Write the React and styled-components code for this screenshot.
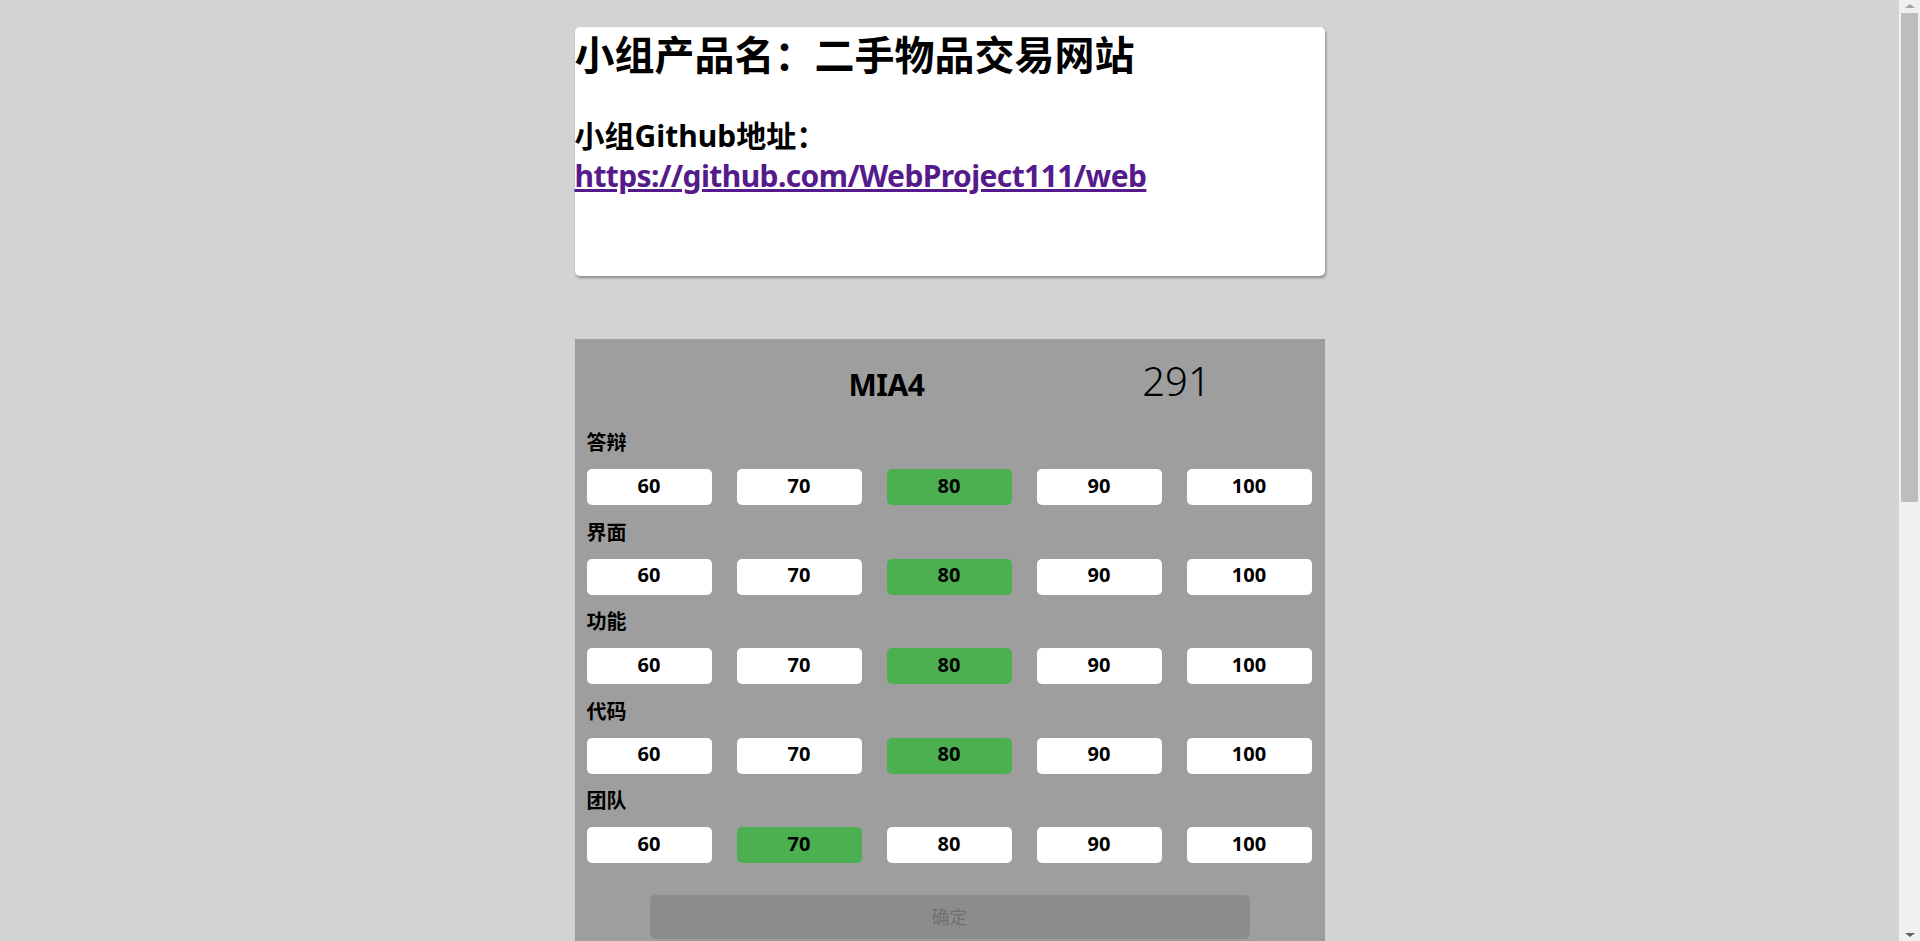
import React, { useState } from "react";
import styled, { createGlobalStyle } from "styled-components";

const GlobalStyle = createGlobalStyle`
  html, body {
    margin: 0;
    padding: 0;
  }
  body {
    background: #d3d3d3;
    font-family: "Noto Sans", "Noto Sans CJK SC", sans-serif;
    font-size: 20px;
    color: #000;
  }
  * {
    box-sizing: border-box;
  }
`;

const Page = styled.div`
  display: flex;
  flex-direction: column;
  align-items: center;
  padding: 27px 21px 120px 0;
`;

/* window scrollbar, drawn over the right edge */
const ScrollTrack = styled.div`
  position: fixed;
  top: 0;
  right: 0;
  width: 21px;
  height: 100vh;
  background: #f0f0f0;
  display: flex;
  flex-direction: column;
  align-items: center;
`;

const Arrow = styled.div`
  width: 0;
  height: 0;
  margin: 4px 0;
  border-left: 5px solid transparent;
  border-right: 5px solid transparent;
  ${(p) =>
    p.$down
      ? "border-top: 4px solid #606060; margin-top: auto;"
      : "border-bottom: 4px solid #a3a3a3;"}
`;

const Thumb = styled.div`
  width: 17px;
  height: 489px;
  margin-top: 1px;
  background: #bdbdbd;
`;

const InfoCard = styled.section`
  width: 750px;
  height: 249px;
  background: #fff;
  border-radius: 5px;
  box-shadow: 1px 2px 3px rgba(0, 0, 0, 0.35);
`;

const Title = styled.h1`
  margin: 0;
  font-size: 40px;
  line-height: 56px;
  font-weight: 700;
`;

const Subtitle = styled.h2`
  margin: 33px 0 0;
  font-size: 30px;
  line-height: 40px;
  font-weight: 700;
`;

const RepoLink = styled.a`
  display: inline-block;
  color: #551a8b;
  text-decoration: underline;
  letter-spacing: -0.6px;
`;

const ScorePanel = styled.section`
  width: 750px;
  margin-top: 63px;
  padding: 15px 12px 40px;
  background: #9e9e9e;
`;

const Header = styled.div`
  display: grid;
  grid-template-columns: 150px 150px;
  column-gap: 136px;
  align-items: baseline;
  padding-left: 225px;
  height: 54px;
  margin-bottom: 22px;
  text-align: center;
  line-height: 54px;
`;

const GroupName = styled.span`
  font-size: 30px;
  font-weight: 700;
  letter-spacing: -0.5px;
`;

const Total = styled.span`
  font-size: 40px;
  font-weight: 300;
  margin-left: 8px;
`;

const Section = styled.div`
  margin-bottom: 14.5px;
`;

const Label = styled.div`
  font-size: 20px;
  font-weight: 700;
  line-height: 25px;
  margin-bottom: 14px;
`;

const Options = styled.div`
  display: grid;
  grid-template-columns: repeat(5, 125px);
  column-gap: 25px;
`;

const Option = styled.button`
  height: 36px;
  border: none;
  border-radius: 5px;
  padding: 0 0 4px;
  background: ${(p) => (p.$active ? "#4caf50" : "#fff")};
  color: #000;
  font-family: inherit;
  font-size: 20px;
  font-weight: 700;
  cursor: pointer;
`;

const Confirm = styled.button`
  display: block;
  width: 600px;
  height: 44px;
  margin: 32px auto 0;
  padding: 0 0 2px;
  border: none;
  border-radius: 5px;
  background: #8c8c8c;
  color: #707070;
  font-family: inherit;
  font-size: 18px;
`;

const SCORES = [60, 70, 80, 90, 100];
const CATEGORIES = [
  { name: "答辩", value: 80 },
  { name: "界面", value: 80 },
  { name: "功能", value: 80 },
  { name: "代码", value: 80 },
  { name: "团队", value: 70 },
];

export default function App() {
  const [picked, setPicked] = useState(CATEGORIES.map((c) => c.value));

  const choose = (i, v) => {
    const next = [...picked];
    next[i] = v;
    setPicked(next);
  };

  return (
    <>
      <GlobalStyle />
      <Page>
        <InfoCard>
          <Title>小组产品名：二手物品交易网站</Title>
          <Subtitle>
            小组Github地址：
            <RepoLink href="#">https://github.com/WebProject111/web</RepoLink>
          </Subtitle>
        </InfoCard>

        <ScorePanel>
          <Header>
            <GroupName>MIA4</GroupName>
            <Total>291</Total>
          </Header>
          {CATEGORIES.map((c, i) => (
            <Section key={c.name}>
              <Label>{c.name}</Label>
              <Options>
                {SCORES.map((s) => (
                  <Option
                    key={s}
                    $active={picked[i] === s}
                    onClick={() => choose(i, s)}
                  >
                    {s}
                  </Option>
                ))}
              </Options>
            </Section>
          ))}
          <Confirm disabled>确定</Confirm>
        </ScorePanel>
      </Page>
      <ScrollTrack>
        <Arrow />
        <Thumb />
        <Arrow $down />
      </ScrollTrack>
    </>
  );
}
